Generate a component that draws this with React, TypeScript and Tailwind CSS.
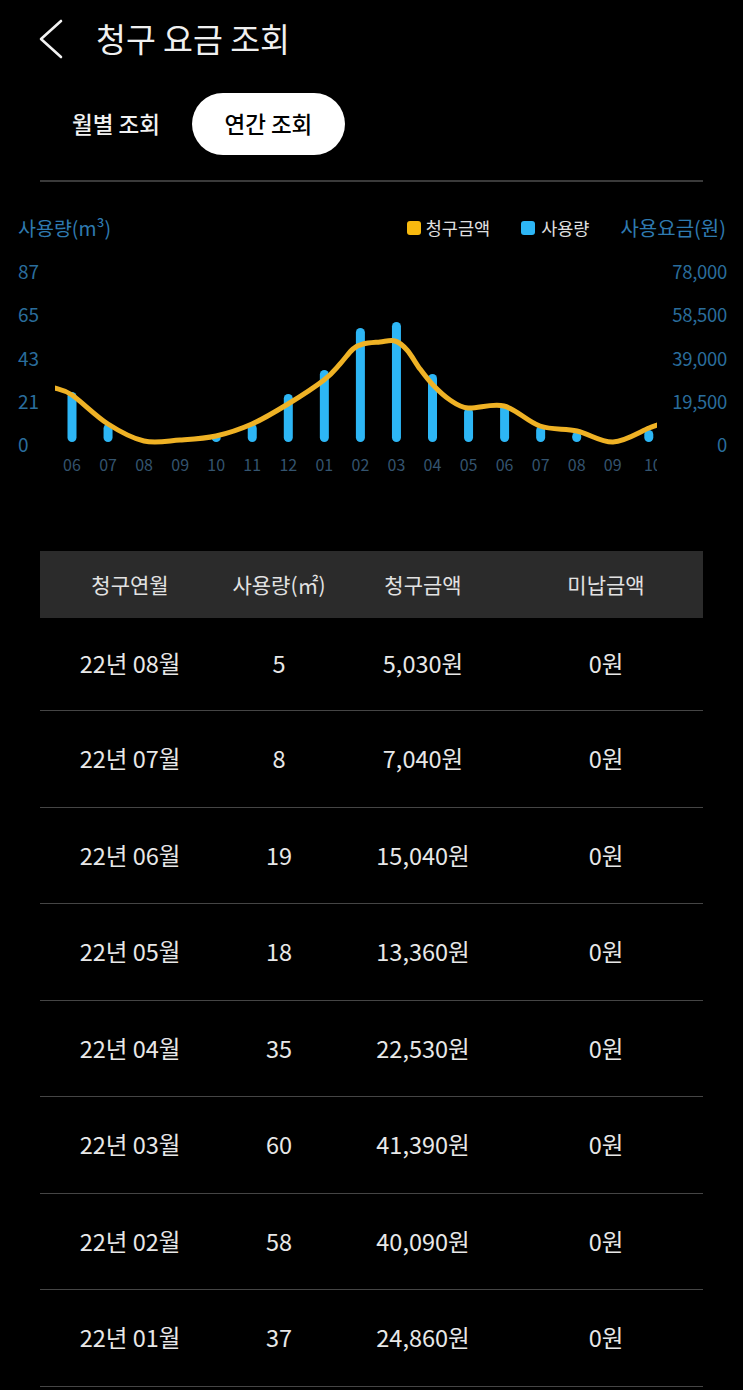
import React from "react";

type Pt = [number, number];

function smoothPath(pts: Pt[]): string {
  let d = `M ${pts[0][0]} ${pts[0][1]}`;
  for (let i = 0; i < pts.length - 1; i++) {
    const p0 = pts[i - 1] || pts[i];
    const p1 = pts[i];
    const p2 = pts[i + 1];
    const p3 = pts[i + 2] || p2;
    const t = 6;
    const c1x = p1[0] + (p2[0] - p0[0]) / t;
    const c1y = p1[1] + (p2[1] - p0[1]) / t;
    const c2x = p2[0] - (p3[0] - p1[0]) / t;
    const c2y = p2[1] - (p3[1] - p1[1]) / t;
    d += ` C ${c1x.toFixed(1)} ${c1y.toFixed(1)}, ${c2x.toFixed(1)} ${c2y.toFixed(1)}, ${p2[0]} ${p2[1]}`;
  }
  return d;
}

const months = ["06", "07", "08", "09", "10", "11", "12", "01", "02", "03", "04", "05", "06", "07", "08", "09", "10"];
const usage = [25, 9, 0, 0, 1, 9, 24, 36, 57, 60, 34, 17, 19, 8, 5, 0, 6];

// absolute page coordinates, converted to svg coords (x-55, y-255)
const absPts: Pt[] = [
  [55, 389],
  [72, 396],
  [108, 425],
  [144, 442],
  [180, 441],
  [216, 437],
  [252, 425],
  [288, 405],
  [324, 381],
  [340, 365],
  [353, 350],
  [363, 345],
  [380, 343],
  [395, 342],
  [407, 351],
  [420, 370],
  [433, 386],
  [450, 401],
  [468, 409],
  [504, 407],
  [540, 427],
  [577, 432],
  [613, 443],
  [649, 429],
  [657, 426],
];
const linePts: Pt[] = absPts.map(([x, y]) => [x - 55, y - 255]);

const rows = [
  ["22년 08월", "5", "5,030원", "0원"],
  ["22년 07월", "8", "7,040원", "0원"],
  ["22년 06월", "19", "15,040원", "0원"],
  ["22년 05월", "18", "13,360원", "0원"],
  ["22년 04월", "35", "22,530원", "0원"],
  ["22년 03월", "60", "41,390원", "0원"],
  ["22년 02월", "58", "40,090원", "0원"],
  ["22년 01월", "37", "24,860원", "0원"],
];

const font = { fontFamily: '"Noto Sans CJK KR", "Noto Sans", sans-serif' };

export default function App() {
  const baseY = 188;
  return (
    <div className="w-[743px] min-h-[1390px] bg-black text-[#f0f0f0] overflow-hidden" style={font}>
      {/* Header */}
      <div className="h-[80px] flex items-center">
        <svg className="ml-[38px] mt-[-2px] shrink-0" width="26" height="40" viewBox="0 0 26 40">
          <polyline points="23,2 3,20 23,38" fill="none" stroke="#f2f2f2" strokeWidth="2.6" strokeLinecap="round" strokeLinejoin="round" />
        </svg>
        <div className="ml-[32px] text-[32.5px] leading-none mt-[-4px]">청구 요금 조회</div>
      </div>

      {/* Tabs */}
      <div className="mt-[13px] h-[62px] flex items-center pl-[72px]">
        <div className="text-[22.5px] font-medium text-[#f2f2f2]">월별 조회</div>
        <div className="ml-[32px] h-[62px] w-[153px] rounded-full bg-white text-black flex items-center justify-center text-[22.5px] font-medium">
          연간 조회
        </div>
      </div>

      {/* Divider */}
      <div className="mt-[25px] mx-[40px] h-[2px] bg-[#3a3a3a]" />

      {/* Chart header */}
      <div className="mt-[34px] h-[24px] flex items-center">
        <div className="pl-[18px] text-[19.5px] text-[#2f7ab0] leading-none">사용량(m³)</div>
        <div className="ml-auto flex items-center">
          <div className="flex items-center">
            <span className="w-[14px] h-[14px] rounded-[3px] bg-[#f7b90f] inline-block" />
            <span className="ml-[5px] text-[17.5px] text-[#e0e0e0] leading-none">청구금액</span>
          </div>
          <div className="ml-[31px] flex items-center">
            <span className="w-[14px] h-[14px] rounded-[3px] bg-[#2db6f5] inline-block" />
            <span className="ml-[6px] text-[17.5px] text-[#e0e0e0] leading-none">사용량</span>
          </div>
          <div className="ml-[31px] pr-[17px] text-[20px] text-[#2f7ab0] leading-none">사용요금(원)</div>
        </div>
      </div>

      {/* Chart */}
      <div className="mt-[14px] h-[225px] flex">
        <div className="w-[55px] shrink-0 pl-[18px]">
          <div className="mt-[7px] h-[193px] flex flex-col justify-between text-[19px] leading-[20px] text-[#2a6d9c]">
            <div>87</div>
            <div>65</div>
            <div>43</div>
            <div>21</div>
            <div>0</div>
          </div>
        </div>
        <svg width="602" height="225" viewBox="0 0 602 225" className="overflow-hidden shrink-0 block">
          {usage.map((v, i) => {
            if (v <= 0) return null;
            const cx = 17 + i * 36.05;
            const h = Math.max(v * 2, 8);
            return <rect key={i} x={cx - 4.5} y={baseY - h} width="9" height={h} rx="4.5" fill="#2db6f5" />;
          })}
          <rect x={125 - 3} y={184} width="6" height="3" rx="1" fill="#2db6f5" opacity="0.8" />
          <path d={smoothPath(linePts)} fill="none" stroke="#efb225" strokeWidth="5" strokeLinecap="round" strokeLinejoin="round" />
          {months.map((m, i) => (
            <text
              key={i}
              x={17 + i * 36.05 + (i === 16 ? 4 : 0)}
              y={217}
              textAnchor="middle"
              fontSize="16"
              fill="#34546f"
              style={font}
            >
              {m}
            </text>
          ))}
        </svg>
        <div className="w-[86px] shrink-0 pr-[16px]">
          <div className="mt-[7px] h-[193px] flex flex-col justify-between text-right text-[18.5px] leading-[20px] text-[#2a6d9c] tracking-[-0.3px]">
            <div>78,000</div>
            <div>58,500</div>
            <div>39,000</div>
            <div>19,500</div>
            <div>0</div>
          </div>
        </div>
      </div>

      {/* Table */}
      <div className="mt-[72px] mx-[40px]">
        <div className="h-[67px] bg-[#2b2b2b] grid grid-cols-[180px_118px_170px_196px] items-center text-[21px] text-[#e2e2e2]">
          <div className="text-center">청구연월</div>
          <div className="text-center">사용량(㎡)</div>
          <div className="text-center">청구금액</div>
          <div className="text-center">미납금액</div>
        </div>
        {rows.map((r, i) => (
          <div
            key={i}
            className={
              (i === 0 ? "h-[93px] " : "h-[96.5px] ") +
              "border-b border-[#454545] grid grid-cols-[180px_118px_170px_196px] items-center text-[23.5px] text-[#e8e8e8]"
            }
          >
            <div className="text-center">{r[0]}</div>
            <div className="text-center">{r[1]}</div>
            <div className="text-center">{r[2]}</div>
            <div className="text-center">{r[3]}</div>
          </div>
        ))}
      </div>
    </div>
  );
}
